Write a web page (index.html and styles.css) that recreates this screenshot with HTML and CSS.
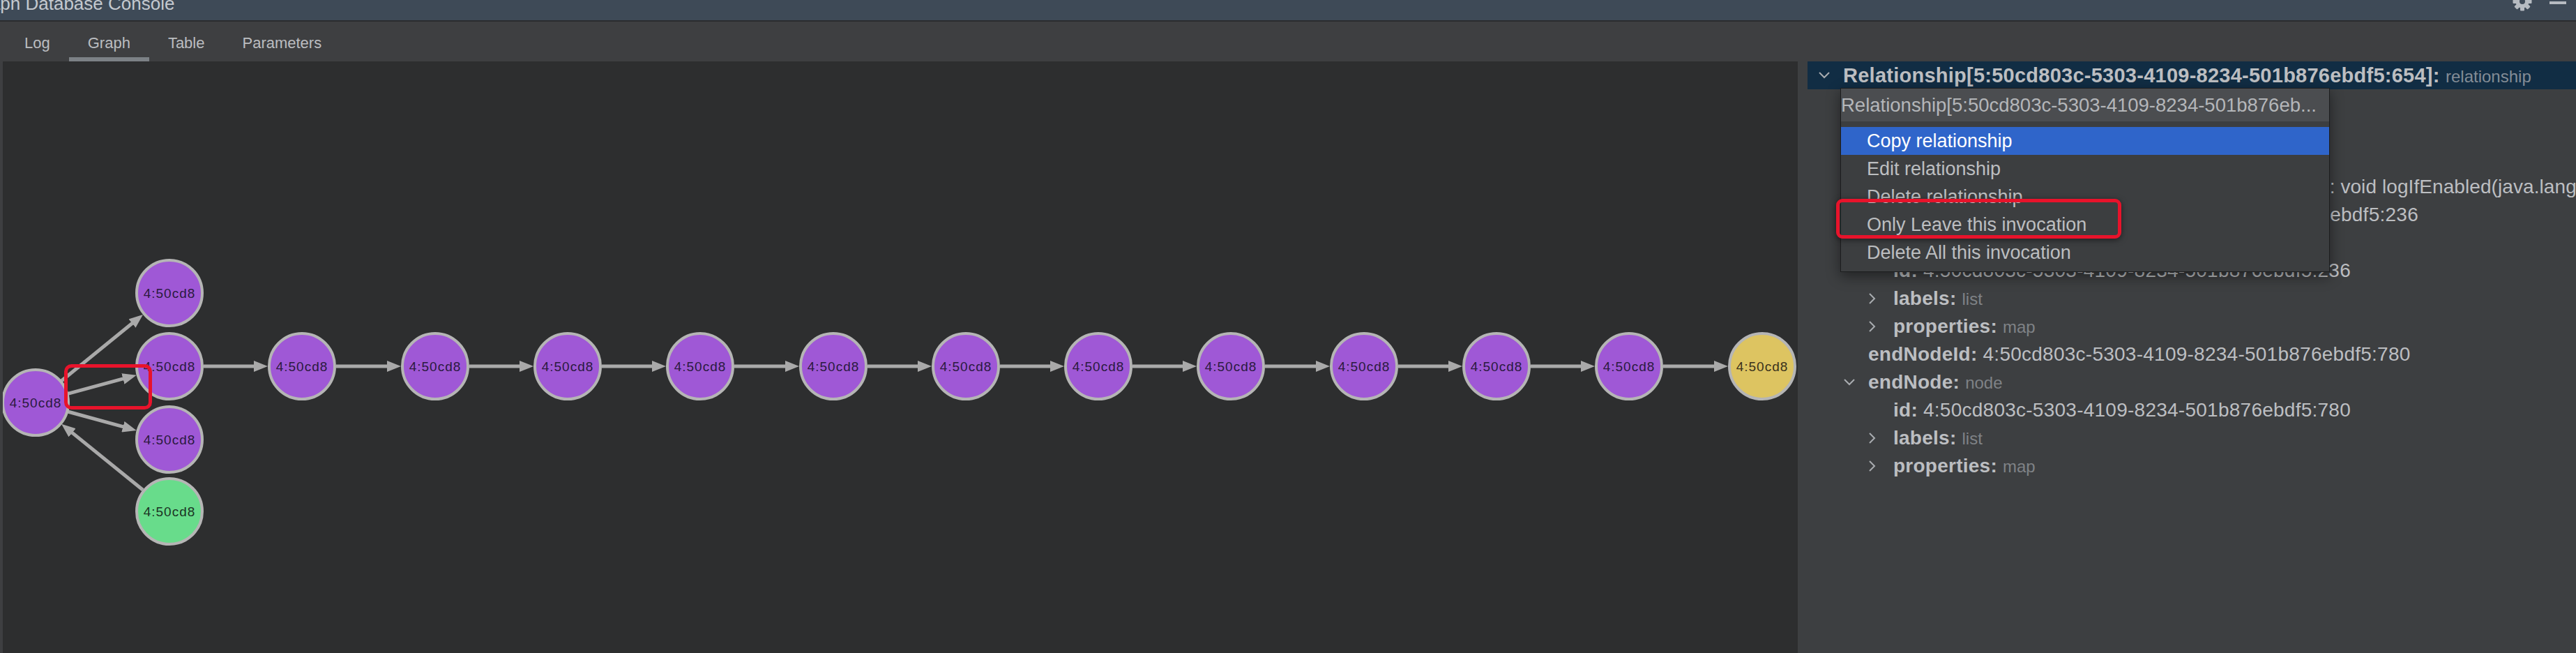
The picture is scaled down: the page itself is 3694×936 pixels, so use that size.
FILE: index.html
```html
<!DOCTYPE html>
<html lang="en">
<head>
<meta charset="utf-8">
<title>Graph Database Console</title>
<link rel="stylesheet" href="styles.css">
</head>
<body>
<div class="window">
  <header class="titlebar">
    <div class="title">Graph Database Console</div>
    <div class="title-actions">
      <svg class="gear" width="30" height="30" viewBox="-15 -15 30 30">
        <g class="gear-body">
          <circle r="9.5"/>
          <rect x="-3" y="-13.5" width="6" height="6" rx="1"/>
          <rect x="-3" y="-13.5" width="6" height="6" rx="1" transform="rotate(45)"/>
          <rect x="-3" y="-13.5" width="6" height="6" rx="1" transform="rotate(90)"/>
          <rect x="-3" y="-13.5" width="6" height="6" rx="1" transform="rotate(135)"/>
          <rect x="-3" y="-13.5" width="6" height="6" rx="1" transform="rotate(180)"/>
          <rect x="-3" y="-13.5" width="6" height="6" rx="1" transform="rotate(225)"/>
          <rect x="-3" y="-13.5" width="6" height="6" rx="1" transform="rotate(270)"/>
          <rect x="-3" y="-13.5" width="6" height="6" rx="1" transform="rotate(315)"/>
        </g>
        <circle class="gear-hole" r="4"/>
      </svg>
      <span class="minimize"></span>
    </div>
  </header>

  <nav class="tabs">
    <div class="tab">Log</div>
    <div class="tab active">Graph</div>
    <div class="tab">Table</div>
    <div class="tab">Parameters</div>
  </nav>

  <main class="content">
    <section class="graph">
      <svg class="canvas" width="2574" height="848" viewBox="4 88 2574 848">
        <defs>
          <marker id="arrow" viewBox="0 0 20 16" markerWidth="20" markerHeight="16" refX="2" refY="8" orient="auto" markerUnits="userSpaceOnUse">
            <path class="arrow-head" d="M0 0 L20 8 L0 16 Z"/>
          </marker>
        </defs>

        <g class="edges">
          <line class="edge" x1="88" y1="546" x2="191" y2="462.3"/>
          <line class="edge" x1="97.3" y1="564.3" x2="178.3" y2="542.4"/>
          <line class="edge" x1="97.3" y1="590" x2="178.3" y2="612.2"/>
          <line class="edge" x1="204.9" y1="702.2" x2="102.1" y2="619.1"/>

          <line class="edge" x1="292" y1="525" x2="366" y2="525"/>
          <line class="edge" x1="482" y1="525" x2="557" y2="525"/>
          <line class="edge" x1="673" y1="525" x2="747" y2="525"/>
          <line class="edge" x1="863" y1="525" x2="937" y2="525"/>
          <line class="edge" x1="1053" y1="525" x2="1128" y2="525"/>
          <line class="edge" x1="1244" y1="525" x2="1318" y2="525"/>
          <line class="edge" x1="1434" y1="525" x2="1508" y2="525"/>
          <line class="edge" x1="1624" y1="525" x2="1698" y2="525"/>
          <line class="edge" x1="1814" y1="525" x2="1889" y2="525"/>
          <line class="edge" x1="2005" y1="525" x2="2079" y2="525"/>
          <line class="edge" x1="2195" y1="525" x2="2269" y2="525"/>
          <line class="edge" x1="2385" y1="525" x2="2460" y2="525"/>
        </g>

        <g class="node purple"><circle cx="51" cy="577" r="47"/><text x="51" y="577">4:50cd8</text></g>
        <g class="node purple"><circle cx="243" cy="420" r="47"/><text x="243" y="420">4:50cd8</text></g>
        <g class="node purple"><circle cx="243" cy="525" r="47"/><text x="243" y="525">4:50cd8</text></g>
        <g class="node purple"><circle cx="243" cy="630" r="47"/><text x="243" y="630">4:50cd8</text></g>
        <g class="node green"><circle cx="243" cy="733" r="47"/><text x="243" y="733">4:50cd8</text></g>

        <g class="node purple"><circle cx="433" cy="525" r="47"/><text x="433" y="525">4:50cd8</text></g>
        <g class="node purple"><circle cx="624" cy="525" r="47"/><text x="624" y="525">4:50cd8</text></g>
        <g class="node purple"><circle cx="814" cy="525" r="47"/><text x="814" y="525">4:50cd8</text></g>
        <g class="node purple"><circle cx="1004" cy="525" r="47"/><text x="1004" y="525">4:50cd8</text></g>
        <g class="node purple"><circle cx="1195" cy="525" r="47"/><text x="1195" y="525">4:50cd8</text></g>
        <g class="node purple"><circle cx="1385" cy="525" r="47"/><text x="1385" y="525">4:50cd8</text></g>
        <g class="node purple"><circle cx="1575" cy="525" r="47"/><text x="1575" y="525">4:50cd8</text></g>
        <g class="node purple"><circle cx="1765" cy="525" r="47"/><text x="1765" y="525">4:50cd8</text></g>
        <g class="node purple"><circle cx="1956" cy="525" r="47"/><text x="1956" y="525">4:50cd8</text></g>
        <g class="node purple"><circle cx="2146" cy="525" r="47"/><text x="2146" y="525">4:50cd8</text></g>
        <g class="node purple"><circle cx="2336" cy="525" r="47"/><text x="2336" y="525">4:50cd8</text></g>
        <g class="node yellow"><circle cx="2527" cy="525" r="47"/><text x="2527" y="525">4:50cd8</text></g>

        <rect class="mark" x="94.5" y="524.5" width="121" height="60" rx="8"/>
      </svg>
    </section>

    <aside class="panel">
      <div class="tree">
        <div class="row l0 selected">
          <span class="twisty"><svg width="18" height="12" viewBox="0 0 18 12"><path class="chev" d="M2 2 L9 9 L16 2"/></svg></span>
          <span class="text"><b class="key">Relationship[5:50cd803c-5303-4109-8234-501b876ebdf5:654]:</b> <span class="hint">relationship</span></span>
        </div>
        <div class="row l1"><span class="twisty"></span><span class="text"><b class="key">id:</b> 5:50cd803c-5303-4109-8234-501b876ebdf5:654</span></div>
        <div class="row l1"><span class="twisty"></span><span class="text"><b class="key">type:</b> INVOKE</span></div>
        <div class="row l1">
          <span class="twisty"><svg width="18" height="12" viewBox="0 0 18 12"><path class="chev" d="M2 2 L9 9 L16 2"/></svg></span>
          <span class="text"><b class="key">properties:</b> <span class="hint">map</span></span>
        </div>
        <div class="row l2 tight"><span class="twisty"></span><span class="text"><b class="key">signature:</b> &lt;org.apache.logging.log4j.core.Logger: void logIfEnabled(java.lang.String,org.apache.logging.log4j.Level,java.lang.Object)&gt;</span></div>
        <div class="row l1"><span class="twisty"></span><span class="text"><b class="key">startNodeId:</b> 4:50cd803c-5303-4109-8234-501b876ebdf5:236</span></div>
        <div class="row l1">
          <span class="twisty"><svg width="18" height="12" viewBox="0 0 18 12"><path class="chev" d="M2 2 L9 9 L16 2"/></svg></span>
          <span class="text"><b class="key">startNode:</b> <span class="hint">node</span></span>
        </div>
        <div class="row l2"><span class="twisty"></span><span class="text"><b class="key">id:</b> 4:50cd803c-5303-4109-8234-501b876ebdf5:236</span></div>
        <div class="row l2">
          <span class="twisty"><svg width="12" height="18" viewBox="0 0 12 18"><path class="chev" d="M2 2 L9 9 L2 16"/></svg></span>
          <span class="text"><b class="key">labels:</b> <span class="hint">list</span></span>
        </div>
        <div class="row l2">
          <span class="twisty"><svg width="12" height="18" viewBox="0 0 12 18"><path class="chev" d="M2 2 L9 9 L2 16"/></svg></span>
          <span class="text"><b class="key">properties:</b> <span class="hint">map</span></span>
        </div>
        <div class="row l1"><span class="twisty"></span><span class="text"><b class="key">endNodeId:</b> 4:50cd803c-5303-4109-8234-501b876ebdf5:780</span></div>
        <div class="row l1">
          <span class="twisty"><svg width="18" height="12" viewBox="0 0 18 12"><path class="chev" d="M2 2 L9 9 L16 2"/></svg></span>
          <span class="text"><b class="key">endNode:</b> <span class="hint">node</span></span>
        </div>
        <div class="row l2"><span class="twisty"></span><span class="text"><b class="key">id:</b> 4:50cd803c-5303-4109-8234-501b876ebdf5:780</span></div>
        <div class="row l2">
          <span class="twisty"><svg width="12" height="18" viewBox="0 0 12 18"><path class="chev" d="M2 2 L9 9 L2 16"/></svg></span>
          <span class="text"><b class="key">labels:</b> <span class="hint">list</span></span>
        </div>
        <div class="row l2">
          <span class="twisty"><svg width="12" height="18" viewBox="0 0 12 18"><path class="chev" d="M2 2 L9 9 L2 16"/></svg></span>
          <span class="text"><b class="key">properties:</b> <span class="hint">map</span></span>
        </div>
      </div>

      <div class="menu">
        <div class="menu-header">Relationship[5:50cd803c-5303-4109-8234-501b876eb...</div>
        <div class="menu-list">
          <div class="menu-item active">Copy relationship</div>
          <div class="menu-item">Edit relationship</div>
          <div class="menu-item">Delete relationship</div>
          <div class="menu-item">Only Leave this invocation</div>
          <div class="menu-item">Delete All this invocation</div>
        </div>
      </div>

      <div class="callout"></div>
    </aside>
  </main>
</div>
</body>
</html>
```

FILE: styles.css
```css
* { box-sizing: border-box; }

html, body {
  margin: 0;
  padding: 0;
}

body {
  width: 3694px;
  height: 936px;
  overflow: hidden;
  background: #2d2e2f;
  font-family: "Liberation Sans", Arial, sans-serif;
}

.window {
  display: flex;
  flex-direction: column;
  width: 3694px;
  height: 936px;
}

/* ---------- title bar ---------- */
.titlebar {
  flex: none;
  display: flex;
  height: 31px;
  background: #3e4a57;
  border-bottom: 2px solid #2a2c2f;
  overflow: hidden;
}

.title {
  font-size: 26px;
  line-height: 30px;
  margin: -10px 0 0 -43px;
  color: #c4c9cf;
  white-space: nowrap;
}

.title-actions {
  margin-left: auto;
  display: flex;
  align-items: flex-start;
  gap: 24px;
  padding-right: 14px;
}

.gear { margin-top: -13px; display: block; }
.gear-body { fill: #b6bbc1; }
.gear-hole { fill: #3e4a57; }

.minimize {
  width: 24px;
  height: 4px;
  margin-top: 2px;
  background: #b6bbc1;
}

/* ---------- tabs ---------- */
.tabs {
  flex: none;
  display: flex;
  height: 57px;
  padding-left: 8px;
  background: #3e3f41;
}

.tab {
  display: flex;
  align-items: center;
  padding: 4px 27px 0;
  font-size: 22px;
  color: #bbbdc0;
}

.tab.active {
  box-shadow: inset 0 -6px 0 #7c8186;
}

/* ---------- content ---------- */
.content {
  flex: 1;
  display: flex;
  min-height: 0;
}

.graph {
  flex: none;
  width: 2578px;
  border-left: 4px solid #3e3f41;
  background: #2d2e2f;
  overflow: hidden;
}

.canvas { display: block; }

.edge {
  stroke: #a9a9a9;
  stroke-width: 5;
  marker-end: url(#arrow);
}

.arrow-head { fill: #a9a9a9; }

.node circle {
  stroke: #b5b5b5;
  stroke-width: 4;
}

.node text {
  font-family: "Liberation Sans", Arial, sans-serif;
  font-size: 19px;
  letter-spacing: 1px;
  text-anchor: middle;
  dominant-baseline: central;
  fill: #2b1a40;
}

.purple circle { fill: #9f58d6; }
.green circle { fill: #68dc8b; }
.green text { fill: #1b3424; }
.yellow circle { fill: #ddc461; }
.yellow text { fill: #3a321c; }

.mark {
  fill: none;
  stroke: #e8132b;
  stroke-width: 5;
}

/* ---------- right panel ---------- */
.panel {
  flex: 1;
  position: relative;
  background: #3d3f41;
  padding-left: 14px;
  overflow: hidden;
}

.tree {
  display: flex;
  flex-direction: column;
}

.row {
  display: flex;
  align-items: center;
  height: 40px;
  font-size: 28px;
  letter-spacing: 0.25px;
  color: #bcbec1;
  white-space: nowrap;
}

.row.tight { letter-spacing: 0.08px; }

.row.l0 { padding-left: 15px; }
.row.l1 { padding-left: 51px; }
.row.l2 { padding-left: 87px; }

.row.selected {
  background: #112d44;
  font-size: 29px;
}

.twisty {
  flex: none;
  width: 36px;
  display: flex;
  align-items: center;
}

.twisty svg { display: block; }

.chev {
  fill: none;
  stroke: #a9acb0;
  stroke-width: 2;
}

.key { font-weight: bold; }

.hint {
  font-size: 24px;
  letter-spacing: 0;
  color: #7f8286;
}

.selected .hint { color: #838c96; }

/* ---------- context menu ---------- */
.menu {
  position: absolute;
  left: 61px;
  top: 38px;
  width: 702px;
  height: 264px;
  background: #3c3e40;
  border: 1px solid #1c1d1e;
  box-shadow: 0 6px 18px rgba(0, 0, 0, 0.45);
}

.menu-header {
  height: 47px;
  line-height: 47px;
  background: #4b4d50;
  color: #b4b6b9;
  font-size: 27.5px;
  white-space: nowrap;
  overflow: hidden;
}

.menu-list {
  padding: 8px 0;
}

.menu-item {
  display: flex;
  align-items: center;
  height: 40px;
  padding-left: 37px;
  font-size: 27px;
  color: #bcbec0;
  white-space: nowrap;
}

.menu-item.active {
  background: #2f65ca;
  color: #ffffff;
}

.callout {
  position: absolute;
  left: 55px;
  top: 197px;
  width: 409px;
  height: 57px;
  border: 5px solid #e8132b;
  border-radius: 9px;
  box-shadow: 0 2px 8px rgba(0, 0, 0, 0.5);
}
```
